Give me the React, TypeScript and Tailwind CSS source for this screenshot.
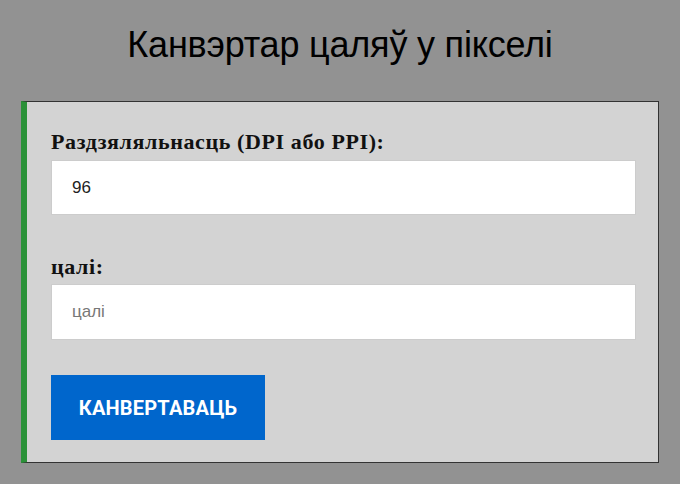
export default function App() {
  return (
    <div className="min-h-[484px] w-[680px] bg-[#929292] pt-[22px]" style={{ fontFamily: '"Liberation Sans", Arial, sans-serif' }}>
      <h1 className="text-center text-[36px] leading-[46px] tracking-[-0.2px] text-black">Канвэртар цаляў у пікселі</h1>
      <div className="mx-[21px] mt-[33px] h-[362px] border border-[#333] border-l-[6px] border-l-[#2b9138] bg-[#d3d3d3] pl-[24px] pr-[22px] pt-[24px]">
        <label className="block text-[22px] font-bold leading-[32px] tracking-[0.6px] text-[#111]" style={{ fontFamily: '"Liberation Serif", "Times New Roman", serif' }}>
          Раздзяляльнасць (DPI або PPI):
        </label>
        <input
          defaultValue="96"
          className="mt-[2px] block h-[55px] w-full border border-[#ccc] bg-white px-[20px] text-[17px] text-[#222] outline-none"
        />
        <label className="mt-[36px] block text-[22px] font-bold leading-[32px] tracking-[0.6px] text-[#111]" style={{ fontFamily: '"Liberation Serif", "Times New Roman", serif' }}>
          цалі:
        </label>
        <input
          placeholder="цалі"
          className="mt-[1px] block h-[56px] w-full border border-[#ccc] bg-white px-[20px] text-[17px] text-[#222] outline-none placeholder:text-[#777]"
        />
        <button className="mt-[35px] h-[65px] w-[214px] bg-[#0066cc] text-[20px] font-bold tracking-[0.2px] text-white" style={{ fontFamily: 'Roboto, "Liberation Sans", sans-serif' }}>
          КАНВЕРТАВАЦЬ
        </button>
      </div>
    </div>
  );
}
